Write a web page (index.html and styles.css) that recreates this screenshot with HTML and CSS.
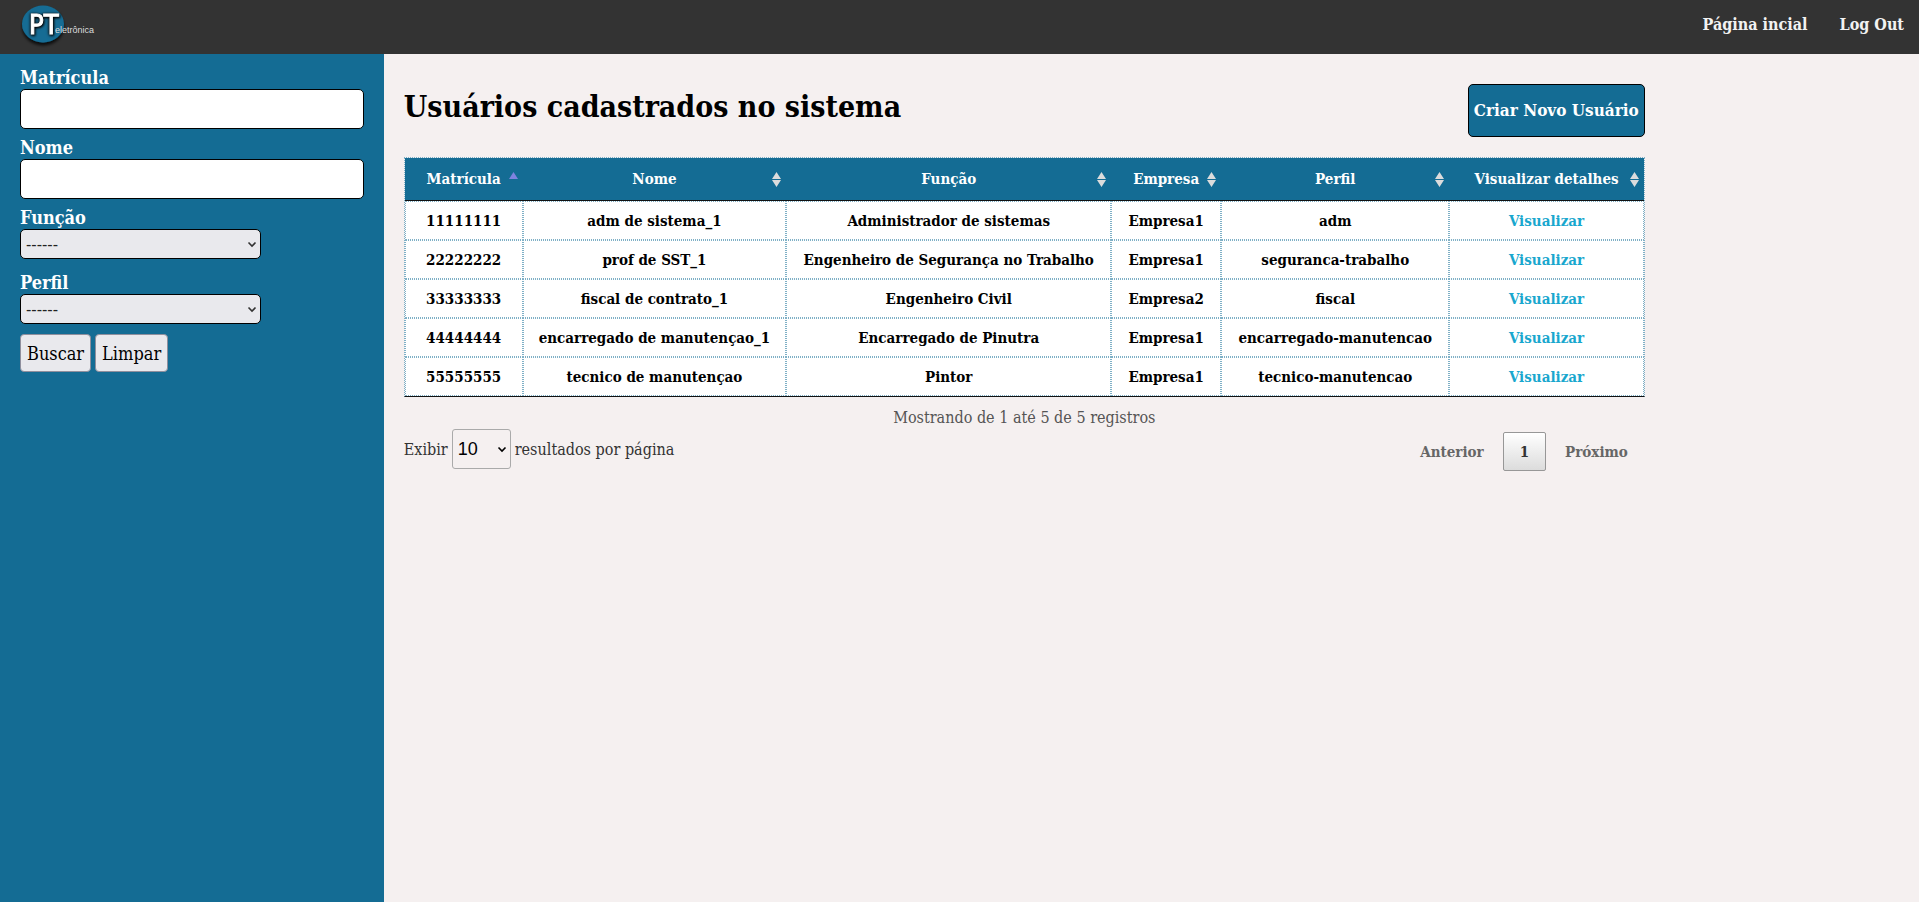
FILE: index.html
```html
<!DOCTYPE html>
<html lang="pt-BR">
<head>
<meta charset="utf-8">
<meta name="viewport" content="width=device-width, initial-scale=1">
<title>Usuários cadastrados no sistema</title>
<link rel="stylesheet" href="styles.css">
</head>
<body>
<svg class="defs" aria-hidden="true">
  <symbol id="sort" viewBox="0 0 9 15"><path d="M4.500 0L9 7H0zM0 8H9L4.500 15z" fill="#dcdcdc"/></symbol>
  <symbol id="asc" viewBox="0 0 9 15"><path d="M4.500 0L9 7H0z" fill="#7f83df"/></symbol>
  <symbol id="chevron" viewBox="0 0 10 7"><path d="M1.500 1.500L5 5L8.500 1.500" fill="none" stroke="currentColor" stroke-width="1.600"/></symbol>
</svg>
<header class="topbar">
  <a class="logo" href="#" aria-label="PT eletrônica">
    <svg width="84" height="50" viewBox="0 0 84 50">
      <defs><filter id="shade" x="-20%" y="-20%" width="140%" height="150%"><feDropShadow dx="0" dy="3" stdDeviation="1.500" flood-color="#000" flood-opacity=".75"/></filter></defs>
      <ellipse cx="23" cy="24" rx="21" ry="18.500" fill="#146c94" filter="url(#shade)"/>
      <text class="logo-big" x="9" y="34">PT</text>
      <text class="logo-small" x="35" y="33">eletrônica</text>
    </svg>
  </a>
  <nav class="nav"><a href="#">Página incial</a><a href="#">Log Out</a></nav>
</header>
<div class="layout">
  <aside class="sidebar">
    <form class="filters">
      <div class="field"><label for="matricula">Matrícula</label><input id="matricula" type="text"></div>
      <div class="field"><label for="nome">Nome</label><input id="nome" type="text"></div>
      <div class="field select-field"><label for="funcao">Função</label>
        <div class="select"><select id="funcao"><option>------</option></select><svg><use href="#chevron"/></svg></div></div>
      <div class="field select-field last"><label for="perfil">Perfil</label>
        <div class="select"><select id="perfil"><option>------</option></select><svg><use href="#chevron"/></svg></div></div>
      <div class="actions"><button type="submit">Buscar</button><button type="reset">Limpar</button></div>
    </form>
  </aside>
  <main class="content">
    <div class="panel">
      <div class="heading"><h1>Usuários cadastrados no sistema</h1><a class="create" href="#">Criar Novo Usuário</a></div>
      <table class="users">
        <colgroup><col class="c1"><col class="c2"><col class="c3"><col class="c4"><col class="c5"><col class="c6"></colgroup>
        <thead><tr>
          <th>Matrícula<svg><use href="#asc"/></svg></th>
          <th>Nome<svg><use href="#sort"/></svg></th>
          <th>Função<svg><use href="#sort"/></svg></th>
          <th>Empresa<svg><use href="#sort"/></svg></th>
          <th>Perfil<svg><use href="#sort"/></svg></th>
          <th>Visualizar detalhes<svg><use href="#sort"/></svg></th>
        </tr></thead>
        <tbody>
          <tr><td>11111111</td><td>adm de sistema_1</td><td>Administrador de sistemas</td><td>Empresa1</td><td>adm</td><td><a href="#">Visualizar</a></td></tr>
          <tr><td>22222222</td><td>prof de SST_1</td><td>Engenheiro de Segurança no Trabalho</td><td>Empresa1</td><td>seguranca-trabalho</td><td><a href="#">Visualizar</a></td></tr>
          <tr><td>33333333</td><td>fiscal de contrato_1</td><td>Engenheiro Civil</td><td>Empresa2</td><td>fiscal</td><td><a href="#">Visualizar</a></td></tr>
          <tr><td>44444444</td><td>encarregado de manutençao_1</td><td>Encarregado de Pinutra</td><td>Empresa1</td><td>encarregado-manutencao</td><td><a href="#">Visualizar</a></td></tr>
          <tr><td>55555555</td><td>tecnico de manutençao</td><td>Pintor</td><td>Empresa1</td><td>tecnico-manutencao</td><td><a href="#">Visualizar</a></td></tr>
        </tbody>
      </table>
      <p class="info">Mostrando de 1 até 5 de 5 registros</p>
      <div class="footer">
        <div class="length"><label for="len">Exibir</label>
          <div class="select small"><select id="len"><option>10</option></select><svg><use href="#chevron"/></svg></div>
          <span>resultados por página</span></div>
        <div class="pages"><button type="button">Anterior</button><button type="button" class="current">1</button><button type="button">Próximo</button></div>
      </div>
    </div>
  </main>
</div>
</body>
</html>
```
FILE: styles.css
```css
* { box-sizing: border-box; }
body {
  margin: 0;
  min-height: 100vh;
  display: flex;
  flex-direction: column;
  background: #f5f0f0;
  color: #000;
  font-family: "Roboto Slab", "DejaVu Serif Condensed", "DejaVu Serif", serif;
  font-size: 16px;
}
a { text-decoration: none; }
button { font-family: inherit; cursor: pointer; }
.defs { display: none; }

.topbar {
  display: flex;
  justify-content: space-between;
  height: 54px;
  padding: 0 15px 0 20px;
  background: #333;
}
.logo svg { display: block; }
.logo text { fill: #fff; }
.logo-big {
  font-family: "DejaVu Sans Condensed", "DejaVu Sans", sans-serif;
  font-size: 27px;
  stroke: #fff;
  stroke-width: 1px;
  filter: drop-shadow(1px 1px 1px #000) drop-shadow(-1px 0 1px #14222b);
}
.logo text.logo-small { font-family: "Liberation Sans", Arial, sans-serif; font-size: 9px; fill: #ddd; }
.nav { display: flex; gap: 32px; padding-top: 13px; line-height: 24px; }
.nav a { color: #f2f2f2; font-weight: 700; }

.layout { flex: 1; display: flex; }
.sidebar { width: 20%; padding: 12px 20px; background: #146c94; }
.field { display: flex; flex-direction: column; margin-bottom: 7px; }
.field label { color: #fff; font-size: 18px; font-weight: 700; line-height: 23px; }
.field input {
  width: 100%;
  height: 40px;
  padding: 0 8px;
  border: 1px solid #000;
  border-radius: 5px;
  background: #fff;
  font-size: 16px;
}
.select-field { margin-bottom: 12px; }
.last { margin-bottom: 10px; }
.select { position: relative; width: 70%; }
.select select {
  appearance: none;
  display: block;
  width: 100%;
  height: 30px;
  padding: 0 5px;
  border: 1px solid #000;
  border-radius: 5px;
  background: #e9e9ed;
  color: #222;
  font-family: "Liberation Sans", Arial, sans-serif;
  font-size: 16px;
}
.select svg {
  position: absolute;
  right: 4px;
  top: 12px;
  width: 10px;
  height: 7px;
  color: #333;
  pointer-events: none;
}
.actions { display: flex; gap: 4px; }
.actions button {
  height: 38px;
  padding: 0 6px;
  border: 1px solid #8f8f9d;
  border-radius: 4px;
  background: #e9e9ed;
  font-size: 18px;
}

.content { flex: 1; padding: 30px 20px; }
.panel { width: 83%; }
.heading { display: flex; justify-content: space-between; align-items: flex-start; margin-bottom: 20px; }
h1 { margin: 0; font-size: 30px; line-height: 46px; }
.create {
  padding: 0 5px;
  border: 1px solid #000;
  border-radius: 5px;
  background: #146c94;
  color: #fff;
  font-size: 17px;
  font-weight: 700;
  line-height: 51px;
}
.users {
  width: 100%;
  table-layout: fixed;
  border-collapse: separate;
  border-spacing: 0;
  border: 1px dotted #7fb0c6;
  border-bottom: 1px solid #111;
  font-size: 15px;
  font-weight: 700;
  text-align: center;
}
.c1 { width: 9.5%; }
.c2 { width: 21.3%; }
.c3 { width: 26.2%; }
.c4 { width: 8.9%; }
.c5 { width: 18.4%; }
.c6 { width: 15.7%; }
.users th, .users td { padding: 0; white-space: nowrap; }
.users th {
  position: relative;
  height: 43px;
  border-bottom: 1px solid #111;
  background: #146c94;
  color: #fff;
}
.users th svg { position: absolute; right: 5px; top: 14px; width: 9px; height: 15px; }
.users td { height: 39px; border: 1px dotted #7fb0c6; background: #fff; }
.users td a { color: #19a7ce; }

.info { margin: 10px 0 0; color: #555; line-height: 22px; text-align: center; }
.footer { display: flex; justify-content: space-between; align-items: flex-start; }
.length { display: flex; align-items: center; gap: 4px; color: #333; }
.select.small { width: 59px; }
.select.small select {
  height: 40px;
  border-color: #aaa;
  border-radius: 3px;
  background: transparent;
  color: #000;
  font-size: 18px;
}
.select.small svg { top: 17px; color: #000; }
.pages { display: flex; gap: 2px; padding-top: 3px; }
.pages button {
  height: 39px;
  padding: 0 16px;
  border: 1px solid transparent;
  border-radius: 2px;
  background: transparent;
  color: #666;
  font-size: 15px;
  font-weight: 700;
}
.pages .current { border-color: #979797; background: linear-gradient(#fff, #dcdcdc); color: #333; }
```
